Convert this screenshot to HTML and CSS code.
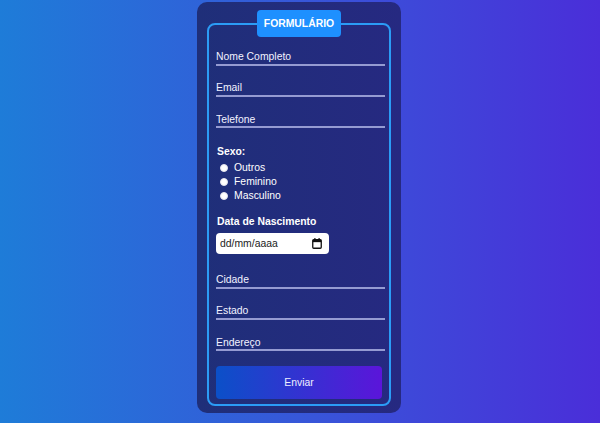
FILE: index.html
```html
<!DOCTYPE html>
<html lang="pt-BR">
<head>
<meta charset="utf-8">
<title>Formulário</title>
<link rel="stylesheet" href="styles.css">
</head>
<body>
<form class="card">
  <fieldset class="frame">
    <legend class="title">FORMULÁRIO</legend>
    <input class="field first" type="text" placeholder="Nome Completo">
    <input class="field" type="text" placeholder="Email">
    <input class="field" type="text" placeholder="Telefone">

    <div class="label sexo">Sexo:</div>
    <label class="radio"><input type="radio" name="sexo"><span>Outros</span></label>
    <label class="radio"><input type="radio" name="sexo"><span>Feminino</span></label>
    <label class="radio"><input type="radio" name="sexo"><span>Masculino</span></label>

    <div class="label nasc">Data de Nascimento</div>
    <div class="date">
      <span>dd/mm/aaaa</span>
      <svg class="cal" width="10" height="11" viewBox="0 0 10 11">
        <rect x="0.75" y="1.75" width="8.5" height="8.5" rx="1" fill="none" stroke="#111" stroke-width="1.3"/>
        <rect x="0.75" y="1.75" width="8.5" height="2.4" fill="#111"/>
        <rect x="2.3" y="0" width="1.2" height="2" fill="#111"/>
        <rect x="6.5" y="0" width="1.2" height="2" fill="#111"/>
      </svg>
    </div>

    <input class="field cidade" type="text" placeholder="Cidade">
    <input class="field" type="text" placeholder="Estado">
    <input class="field" type="text" placeholder="Endereço">

    <button class="send" type="button">Enviar</button>
  </fieldset>
</form>
</body>
</html>
```
FILE: styles.css
```css
* { box-sizing: border-box; }

html, body {
  margin: 0;
  height: 423px;
  overflow: hidden;
}

body {
  background: linear-gradient(90deg, #1e7cd8 0%, #3757d9 50%, #4a2ed9 100%);
  font-family: "Liberation Sans", Arial, sans-serif;
  font-size: 10.4px;
  color: #fff;
  display: flex;
  justify-content: center;
  align-items: flex-start;
  padding-top: 2px;
}

.card {
  width: 204px;
  height: 411px;
  margin-left: -2px;
  padding: 8px 10px 7px 10px;
  border-radius: 10px;
  background: linear-gradient(90deg, #1f2f79 0%, #262981 100%);
}

.frame {
  margin: 0;
  width: 184px;
  min-width: 0;
  height: 396px;
  border: 2px solid #2b9cf6;
  border-radius: 8px;
  padding: 0 7px;
  display: flex;
  flex-direction: column;
  align-items: flex-start;
}

.title {
  margin: 0 auto;
  padding: 7.5px 7px;
  background: #1e90ff;
  border-radius: 4px;
  font-weight: bold;
  font-size: 10.4px;
  line-height: 12px;
  color: #fff;
}

.field {
  display: block;
  flex: none;
  width: 169px;
  height: 15px;
  margin: 16.3px 0 0 0;
  padding: 0 0 1px 0;
  border: 0;
  border-bottom: 2px solid #959bd2;
  background: transparent;
  font-family: "Liberation Sans", Arial, sans-serif;
  font-size: 10.4px;
  line-height: 12px;
  color: #fff;
  outline: none;
}

.field::placeholder { color: #f2f2ff; opacity: 1; }

.field.first { margin-top: 13.5px; }
.field.cidade { margin-top: 19.5px; }

.label {
  font-weight: bold;
  font-size: 10.4px;
  line-height: 12px;
  padding-left: 1px;
}

.sexo { margin-top: 18px; }

.radio {
  display: flex;
  align-items: center;
  height: 14px;
  line-height: 14px;
  padding-left: 4px;
}
.sexo + .radio { margin-top: 3px; }

.radio input {
  -webkit-appearance: none;
  appearance: none;
  width: 8px;
  height: 8px;
  margin: 0 6px 0 0;
  border-radius: 50%;
  background: #fff;
  border: 1px solid #e4e4ee;
}

.nasc { margin-top: 13px; }

.date {
  margin-top: 5px;
  width: 113px;
  height: 21px;
  background: #fff;
  border-radius: 4px;
  display: flex;
  align-items: center;
  justify-content: space-between;
  padding: 0 7px 0 4px;
  color: #222;
  font-size: 10.4px;
}

.cal { display: block; }

.send {
  margin-top: 15px;
  width: 166px;
  height: 33px;
  border: 0;
  border-radius: 4px;
  background: linear-gradient(90deg, #0b50c8 0%, #5b15da 100%);
  color: #eeeeff;
  font-family: "Liberation Sans", Arial, sans-serif;
  font-size: 10.4px;
  cursor: pointer;
}
```
